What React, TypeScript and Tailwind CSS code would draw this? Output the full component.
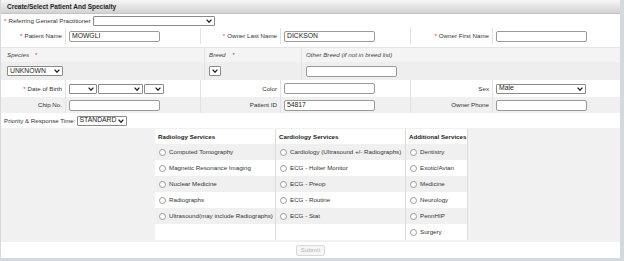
import React from 'react';

const Req = () => <span className="text-[#e0302a] mr-[2px]">*</span>;

const Chevron = () => (
  <svg width="6" height="4" viewBox="0 0 6 4" className="shrink-0">
    <path d="M0.6 0.6 L3 3.2 L5.4 0.6" fill="none" stroke="#222" strokeWidth="1.3" />
  </svg>
);

const Input = ({ w, value }: { w: number; value?: string }) => (
  <div
    className="h-[11px] border border-[#9a9a9a] rounded-[2px] bg-white flex items-center px-[2px] text-[#222] text-[6.8px] leading-none"
    style={{ width: w }}
  >
    {value}
  </div>
);

const Select = ({ w, value }: { w: number; value?: string }) => (
  <div
    className="h-[10px] border border-[#8a8a8a] rounded-[1px] bg-white flex items-center justify-between pl-[2px] pr-[2px] text-[#222] text-[6.8px] leading-none"
    style={{ width: w }}
  >
    <span>{value}</span>
    <Chevron />
  </div>
);

const Radio = () => <span className="w-[7px] h-[7px] rounded-full border border-[#9a9a9a] bg-white shrink-0" />;

const Label = ({ children, w, req }: { children: React.ReactNode; w: number; req?: boolean }) => (
  <div
    className="h-full flex items-center justify-end pr-[3px] border-r border-[#e2e2e2] shrink-0"
    style={{ width: w }}
  >
    {req && <Req />}
    {children}
  </div>
);

const Cell = ({ children, w, last }: { children?: React.ReactNode; w: number; last?: boolean }) => (
  <div
    className={`h-full flex items-center pl-[3px] shrink-0 ${last ? '' : 'border-r border-[#e2e2e2]'}`}
    style={{ width: w }}
  >
    {children}
  </div>
);

const radiology = ['Computed Tomography', 'Magnetic Resonance Imaging', 'Nuclear Medicine', 'Radiographs', 'Ultrasound(may include Radiographs)', ''];
const cardiology = ['Cardiology (Ultrasound +/- Radiographs)', 'ECG - Holter Monitor', 'ECG - Preop', 'ECG - Routine', 'ECG - Stat', ''];
const additional = ['Dentistry', 'Exotic/Avian', 'Medicine', 'Neurology', 'PennHIP', 'Surgery'];

export default function App() {
  return (
    <div className="w-[624px] h-[261px] bg-white font-['Liberation_Sans',Arial,sans-serif] text-[6.2px] text-[#333] whitespace-nowrap overflow-hidden">
      <div className="w-[624px] h-[261px] border-l border-r-[4px] border-b-[3px] border-[#d3d9df] flex flex-col">
        {/* header */}
        <div className="h-[14px] shrink-0 bg-gradient-to-b from-[#f6f6f6] to-[#d2d2d2] border-b border-[#c4c4c4] flex items-center pl-[6px] font-bold text-[6.5px] text-[#1e1e1e]">
          Create/Select Patient And Specialty
        </div>

        {/* referring */}
        <div className="h-[14px] shrink-0 flex items-center pl-[3px]">
          <Req />
          <span className="mr-[2px]">Referring General Practitioner</span>
          <Select w={122} />
        </div>

        {/* names */}
        <div className="h-[16px] shrink-0 flex items-center">
          <Label w={65} req>Patient Name</Label>
          <Cell w={135}><Input w={91} value="MOWGLI" /></Cell>
          <Label w={80} req>Owner Last Name</Label>
          <Cell w={130}><Input w={91} value="DICKSON" /></Cell>
          <Label w={82} req>Owner First Name</Label>
          <Cell w={127} last><Input w={91} /></Cell>
        </div>

        {/* species */}
        <div className="h-[3px] shrink-0" />
        <div className="h-[15px] shrink-0 flex bg-[#f4f4f4] italic text-[#444] border-t border-[#e4e4e4]">
          <div className="w-[204px] border-r border-[#e2e2e2] flex items-center pl-[6px]">
            Species<span className="text-[#e0302a] not-italic ml-[6px]">*</span>
          </div>
          <div className="w-[97px] border-r border-[#e2e2e2] flex items-center pl-[4px]">
            Breed<span className="text-[#e0302a] not-italic ml-[7px]">*</span>
          </div>
          <div className="flex-1 flex items-center pl-[4px]">Other Breed (if not in breed list)</div>
        </div>
        <div className="h-[18px] shrink-0 flex bg-[#eeeeee]">
          <div className="w-[204px] border-r border-[#e2e2e2] flex items-center pl-[6px]">
            <Select w={56} value="UNKNOWN" />
          </div>
          <div className="w-[97px] border-r border-[#e2e2e2] flex items-center pl-[4px]">
            <Select w={12} />
          </div>
          <div className="flex-1 flex items-center pl-[4px]">
            <Input w={91} />
          </div>
        </div>

        {/* dob */}
        <div className="h-[17px] shrink-0 flex items-center">
          <Label w={65} req>Date of Birth</Label>
          <Cell w={135}>
            <div className="flex gap-[1px]">
              <Select w={28} />
              <Select w={45} />
              <Select w={20} />
            </div>
          </Cell>
          <Label w={80}>Color</Label>
          <Cell w={130}><Input w={91} /></Cell>
          <Label w={82}>Sex</Label>
          <Cell w={127} last><Select w={90} value="Male" /></Cell>
        </div>

        {/* chip */}
        <div className="h-[16px] shrink-0 flex items-center bg-[#f0f0f0]">
          <Label w={65}>Chip No.</Label>
          <Cell w={135}><Input w={91} /></Cell>
          <Label w={80}>Patient ID</Label>
          <Cell w={130}><Input w={91} value="54817" /></Cell>
          <Label w={82}>Owner Phone</Label>
          <Cell w={127} last><Input w={91} /></Cell>
        </div>

        {/* priority */}
        <div className="h-[15px] shrink-0 flex items-center pl-[3px]">
          <span className="mr-[1px]">Priority &amp; Response Time:</span>
          <Select w={50} value="STANDARD" />
        </div>

        {/* services */}
        <div className="h-[114px] shrink-0 bg-[#f1f1f1] pl-[154px] pt-[1px]">
          <div className="flex w-[313px]">
            {[
              { title: 'Radiology Services', items: radiology, w: 121 },
              { title: 'Cardiology Services', items: cardiology, w: 130 },
              { title: 'Additional Services', items: additional, w: 62 },
            ].map((col, ci) => (
              <div key={ci} className="flex flex-col border-r border-[#dcdcdc]" style={{ width: col.w }}>
                <div className="h-[15px] bg-white flex items-center pl-[3px] font-bold text-[#222]">{col.title}</div>
                {col.items.map((it, i) => (
                  <div
                    key={i}
                    className={`h-[16px] flex items-center pl-[4px] gap-[3px] ${i % 2 === 0 ? 'bg-[#f0f0f0]' : 'bg-white'}`}
                  >
                    {it && <Radio />}
                    {it && <span>{it}</span>}
                  </div>
                ))}
              </div>
            ))}
          </div>
        </div>

        {/* footer */}
        <div className="flex-1 flex items-center justify-center">
          <div className="h-[11px] w-[29px] border border-[#d8d8d8] rounded-[2px] bg-[#f6f6f6] text-[#b4b4b4] flex items-center justify-center">
            Submit
          </div>
        </div>
      </div>
    </div>
  );
}
